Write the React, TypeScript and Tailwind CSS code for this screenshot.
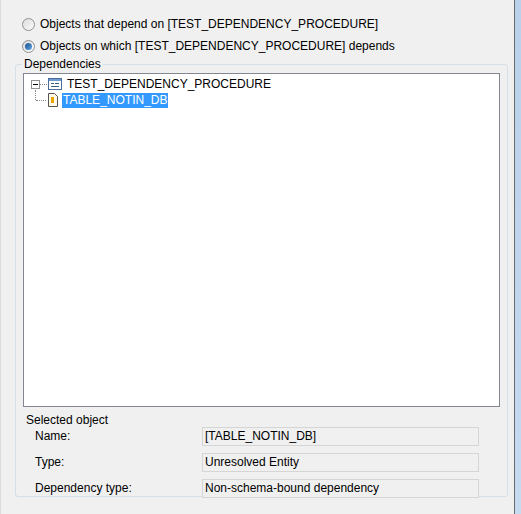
import React from 'react';

const Radio = ({ checked, label }: { checked?: boolean; label: string }) => (
  <div className="flex items-center h-[22px]">
    <span className="w-[13px] h-[13px] rounded-full border border-[#8e8f8f] bg-gradient-to-br from-[#dcdcdc] to-[#fbfbfb] flex items-center justify-center">
      {checked && <span className="w-[7px] h-[7px] rounded-full bg-gradient-to-br from-[#1a4f8a] to-[#5fa8e8]" />}
    </span>
    <span className="ml-[5px]">{label}</span>
  </div>
);

const Field = ({ label, value }: { label: string; value: string }) => (
  <div className="flex items-center h-[26px]">
    <span className="w-[179px] pl-[12px]">{label}</span>
    <div className="w-[277px] h-[19px] bg-[#f0f0f0] border border-[#d5d5d5] flex items-center px-[2px]">{value}</div>
  </div>
);

export default function App() {
  return (
    <div
      className="w-[521px] h-[514px] bg-[#f0f0f0] text-[12px] text-black flex overflow-hidden"
      style={{ fontFamily: '"Liberation Sans", Arial, sans-serif' }}
    >
      <div className="w-[514px] border-l border-[#dcdcdc] flex flex-col">
        <div className="pt-[13px] pl-[21px]">
          <Radio label="Objects that depend on [TEST_DEPENDENCY_PROCEDURE]" />
          <Radio checked label="Objects on which [TEST_DEPENDENCY_PROCEDURE] depends" />
        </div>
        <div className="relative mt-[7px] ml-[14px] w-[493px] h-[433px] border border-[#d5dfe5] rounded-[3px] px-[7px] pt-[8px]">
          <span className="absolute -top-[8px] left-[6px] px-[2px] bg-[#f0f0f0] leading-[14px]">Dependencies</span>
          <div className="h-[334px] bg-white border border-[#828790] relative">
            <div className="flex items-center mt-[2px] ml-[7px] h-[16px]">
              <span className="w-[9px] h-[9px] border border-[#919191] bg-white flex items-center justify-center">
                <span className="w-[5px] h-px bg-black" />
              </span>
              <span className="w-[7px] border-t border-dotted border-[#888]" />
              <svg width="16" height="16" viewBox="0 0 16 16">
                <rect x="1.5" y="2.5" width="13" height="11" fill="#fff" stroke="#4a6d9a" />
                <rect x="2" y="3" width="12" height="2" fill="#6b9bd1" />
                <rect x="4" y="7" width="3" height="1" fill="#3a5f8a" />
                <rect x="8" y="7" width="4" height="1" fill="#3a5f8a" />
                <rect x="4" y="10" width="8" height="1" fill="#3a5f8a" />
              </svg>
              <span className="ml-[4px]">TEST_DEPENDENCY_PROCEDURE</span>
            </div>
            <div className="flex items-center ml-[11px] h-[16px]">
              <span className="w-px h-[10px] -mt-[10px] border-l border-dotted border-[#888]" />
              <span className="w-[10px] border-t border-dotted border-[#888]" />
              <svg width="14" height="16" viewBox="0 0 14 16">
                <path d="M2.5 1.5h6l3 3v10h-9z" fill="#fffbe8" stroke="#555" />
                <rect x="5" y="5" width="3" height="6" fill="#e8a800" />
              </svg>
              <span className="ml-[2px] bg-[#3399ff] text-white px-[1px] leading-[15px]">TABLE_NOTIN_DB</span>
            </div>
          </div>
          <div className="mt-[7px] pl-[3px] leading-[13px]">Selected object</div>
          <div className="-mt-[4px]">
            <Field label="Name:" value="[TABLE_NOTIN_DB]" />
            <Field label="Type:" value="Unresolved Entity" />
            <Field label="Dependency type:" value="Non-schema-bound dependency" />
          </div>
        </div>
      </div>
      <div className="w-px bg-[#6a6a6a]" />
      <div className="flex-1 bg-gradient-to-b from-[#b9d1ea] to-[#c6daf0]" />
    </div>
  );
}
